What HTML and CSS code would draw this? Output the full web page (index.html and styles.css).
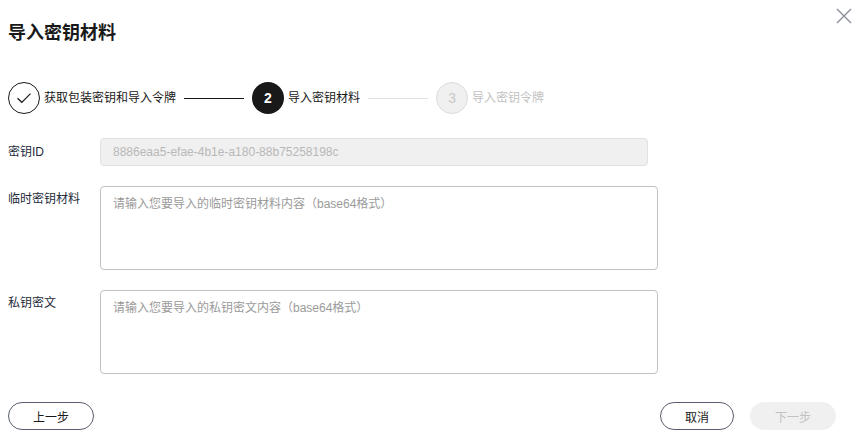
FILE: index.html
```html
<!DOCTYPE html>
<html lang="zh-CN">
<head>
<meta charset="utf-8">
<title>导入密钥材料</title>
<link rel="stylesheet" href="styles.css">
</head>
<body>
<div class="dialog">
  <div class="header">
    <h1 class="title">导入密钥材料</h1>
    <button class="close" aria-label="关闭">
      <svg width="16" height="16" viewBox="0 0 16 16"><path d="M1 1L15 15M15 1L1 15" stroke="#8a8e99" stroke-width="1.4" fill="none"/></svg>
    </button>
  </div>

  <div class="steps">
    <div class="step done">
      <span class="circle">
        <svg width="16" height="12" viewBox="0 0 16 12"><path d="M1.5 6.2L5.8 10.3L14.5 1.6" stroke="#191919" stroke-width="1.2" fill="none"/></svg>
      </span>
      <span class="step-label">获取包装密钥和导入令牌</span>
    </div>
    <span class="line line-dark"></span>
    <div class="step active">
      <span class="circle">2</span>
      <span class="step-label">导入密钥材料</span>
    </div>
    <span class="line line-light"></span>
    <div class="step todo">
      <span class="circle">3</span>
      <span class="step-label">导入密钥令牌</span>
    </div>
  </div>

  <div class="form">
    <div class="row row-center">
      <label class="label">密钥ID</label>
      <div class="input disabled">8886eaa5-efae-4b1e-a180-88b75258198c</div>
    </div>
    <div class="row">
      <label class="label label-top">临时密钥材料</label>
      <div class="textarea"><span class="placeholder">请输入您要导入的临时密钥材料内容（base64格式）</span></div>
    </div>
    <div class="row">
      <label class="label label-top">私钥密文</label>
      <div class="textarea"><span class="placeholder">请输入您要导入的私钥密文内容（base64格式）</span></div>
    </div>
  </div>

  <div class="footer">
    <button class="btn btn-prev">上一步</button>
    <div class="footer-right">
      <button class="btn btn-cancel">取消</button>
      <button class="btn btn-next" disabled>下一步</button>
    </div>
  </div>
</div>
</body>
</html>
```

FILE: styles.css
```css
* { box-sizing: border-box; }

html, body {
  margin: 0;
  padding: 0;
  background: #ffffff;
}

body {
  font-family: "Liberation Sans", "Noto Sans CJK SC", sans-serif;
  font-size: 12px;
  color: #191919;
}

.dialog {
  position: relative;
  width: 862px;
  height: 436px;
  padding: 0 26px 0 8px;
}

.header {
  padding-top: 21px;
  height: 45px;
}

.title {
  margin: 0;
  font-size: 18px;
  line-height: 24px;
  font-weight: 700;
  color: #191919;
}

.close {
  position: absolute;
  top: 8px;
  right: 10px;
  width: 16px;
  height: 16px;
  padding: 0;
  border: 0;
  background: transparent;
  display: flex;
}

.steps {
  margin-top: 37px;
  display: flex;
  align-items: center;
  height: 32px;
}

.step {
  display: flex;
  align-items: center;
  gap: 4px;
}

.circle {
  width: 32px;
  height: 32px;
  border-radius: 50%;
  display: flex;
  align-items: center;
  justify-content: center;
  font-size: 14px;
  font-weight: 700;
}

.step-label {
  font-size: 12px;
  line-height: 16px;
  white-space: nowrap;
}

.done .circle {
  border: 1px solid #191919;
  background: #fff;
}

.active .circle {
  background: #191919;
  color: #ffffff;
}

.todo .circle {
  background: #f0f0f0;
  border: 1px solid #dcdcdc;
  color: #c8c8c8;
  font-weight: 400;
}

.todo .step-label {
  color: #c2c2c2;
}

.line {
  width: 60px;
  height: 1px;
  margin: 0 8px;
}

.line-dark { background: #191919; }
.line-light { background: #dfe1e6; }

.form {
  margin-top: 24px;
  display: flex;
  flex-direction: column;
  gap: 20px;
}

.row {
  display: flex;
  align-items: flex-start;
}

.row-center {
  align-items: center;
}

.label {
  width: 92px;
  flex: none;
  font-size: 12px;
  line-height: 20px;
  color: #252b3a;
}

.label-top {
  padding-top: 3px;
}

.input {
  width: 548px;
  height: 28px;
  padding: 0 12px;
  border: 1px solid #dfe1e6;
  border-radius: 4px;
  line-height: 26px;
  font-size: 12px;
}

.input.disabled {
  background: #f0f0f0;
  color: #b8b8b8;
}

.textarea {
  width: 558px;
  height: 84px;
  padding: 7px 12px;
  border: 1px solid #c2c2c2;
  border-radius: 4px;
  line-height: 20px;
}

.placeholder {
  color: #9a9a9a;
  font-size: 12px;
}

.footer {
  margin-top: 28px;
  display: flex;
  justify-content: space-between;
  align-items: center;
}

.footer-right {
  display: flex;
  gap: 16px;
}

.btn {
  height: 28px;
  border-radius: 14px;
  font-family: inherit;
  font-size: 12px;
  padding: 0;
  background: #ffffff;
  border: 1px solid #575d6c;
  color: #191919;
  cursor: pointer;
}

.btn-prev { width: 86px; }
.btn-cancel { width: 74px; }

.btn-next {
  width: 86px;
  background: #f0f0f0;
  border-color: #f0f0f0;
  color: #c2c2c2;
  cursor: default;
}
```
